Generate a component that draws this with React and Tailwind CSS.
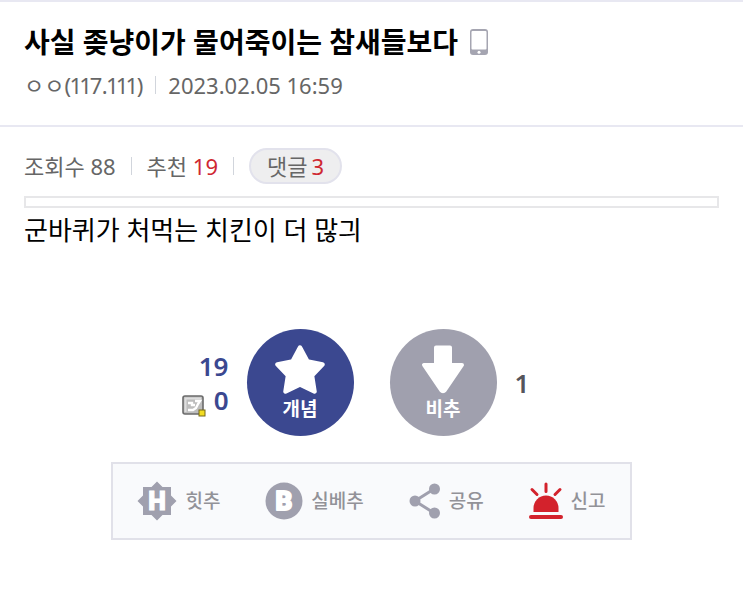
import React, { useState } from "react";

const Divider = () => <span className="h-[18px] w-px bg-gray-300" />;

const PhoneIcon = () => (
  <svg viewBox="0 0 18 26" className="h-[26px] w-[18px]" aria-hidden="true">
    <rect width="18" height="26" rx="3" fill="#a5a5b1" />
    <rect x="1.500" y="2" width="15" height="18.500" rx="1" fill="#fff" />
    <circle cx="9" cy="23.200" r="1.500" fill="#fff" />
  </svg>
);

const StarIcon = () => (
  <svg viewBox="0 0 50 50" className="h-[50px] w-[50px]" aria-hidden="true">
    <path
      d="M25 2.500 L32.500 16.500 L47.500 19.500 L37 30.500 L39.500 46.500 L25 39.500 L10.500 46.500 L13 30.500 L2.500 19.500 L17.500 16.500 Z"
      fill="#fff"
      stroke="#fff"
      strokeWidth="4.500"
      strokeLinejoin="round"
    />
  </svg>
);

const DownIcon = () => (
  <svg viewBox="0 0 50 50" className="h-[50px] w-[50px]" aria-hidden="true">
    <path
      d="M18 2.500 H32 V20 H44 L27 45 Q25 47.500 23 45 L6 20 H18 Z"
      fill="#fff"
      stroke="#fff"
      strokeWidth="4"
      strokeLinejoin="round"
    />
  </svg>
);

// Icono pequeño de los votos de usuarios con cuenta fija
const MemberIcon = () => (
  <svg viewBox="0 0 24 22" className="h-[22px] w-6" aria-hidden="true">
    <rect x="1" y="1" width="20" height="18" rx="2" fill="#bdbdbd" stroke="#6b6b6b" strokeWidth="1.600" />
    <path d="M3.500 17 V3.500 H19" fill="none" stroke="#dedede" strokeWidth="2" />
    <path d="M6 8 H10 V10 H13 M13 6 H18 L16 9 L14 13 L11 15 H6" fill="none" stroke="#fff" strokeWidth="2.400" />
    <rect x="17" y="15" width="6" height="6" fill="#f2dc22" stroke="#75681b" />
  </svg>
);

const HitIcon = () => (
  <svg viewBox="0 0 40 40" className="h-10 w-10" aria-hidden="true">
    <path
      d="M20 0.500 L25.500 6 H34 V14.500 L39.500 20 L34 25.500 V34 H25.500 L20 39.500 L14.500 34 H6 V25.500 L0.500 20 L6 14.500 V6 H14.500 Z"
      fill="#a0a0ae"
    />
    <text x="20" y="29" textAnchor="middle" fill="#fff" stroke="#fff" strokeWidth="1" className="font-[Roboto] text-[25px] font-black">
      H
    </text>
  </svg>
);

const BestIcon = () => (
  <svg viewBox="0 0 38 38" className="h-[38px] w-[38px]" aria-hidden="true">
    <circle cx="19" cy="19" r="18.500" fill="#a0a0ae" />
    <text x="19" y="28" textAnchor="middle" fill="#fff" stroke="#fff" strokeWidth="1.800" strokeLinejoin="round" className="font-[Roboto] text-[26px] font-black">
      B
    </text>
  </svg>
);

const ShareIcon = () => (
  <svg viewBox="0 0 32 36" className="h-9 w-8" aria-hidden="true">
    <path d="M25 6 L6 18 L25 30" fill="none" stroke="#a0a0ae" strokeWidth="3" />
    <circle cx="25.500" cy="6" r="5.500" fill="#a0a0ae" />
    <circle cx="6" cy="18" r="5.500" fill="#a0a0ae" />
    <circle cx="25.500" cy="30" r="5.500" fill="#a0a0ae" />
  </svg>
);

const SirenIcon = () => (
  <svg viewBox="0 0 34 38" className="h-[38px] w-[34px]" aria-hidden="true">
    <path d="M4.500 30 V26 A12.500 12.500 0 0 1 29.500 26 V30 Z" fill="#d3222c" />
    <path
      d="M17 2 V9.500 M3 7.500 L8 12.500 M31 7.500 L26 12.500"
      stroke="#d3222c"
      strokeWidth="3"
      strokeLinecap="round"
    />
    <path d="M2 35 H32" stroke="#d3222c" strokeWidth="4" strokeLinecap="round" />
  </svg>
);

const actions = [
  { label: "힛추", icon: HitIcon },
  { label: "실베추", icon: BestIcon },
  { label: "공유", icon: ShareIcon },
  { label: "신고", icon: SirenIcon },
];

const App = () => {
  const [up, setUp] = useState(19);
  const [down, setDown] = useState(1);

  return (
    <main className="border-t-2 border-[#e8e8f2] bg-white font-['Noto_Sans','Noto_Sans_CJK_KR',sans-serif] text-black">
      <header className="border-b-2 border-[#e8e8f2] px-6 pt-5 pb-6">
        <div className="flex items-center gap-3">
          <h1 className="text-[28px] leading-10 font-bold">
            사실 좆냥이가 물어죽이는 참새들보다
          </h1>
          <PhoneIcon />
        </div>
        <div className="mt-[7px] flex items-center gap-3 text-[22px] leading-8 text-[#666]">
          <span className="proportional-nums">ㅇㅇ(117.111)</span>
          <Divider />
          <time dateTime="2023-02-05T16:59">2023.02.05 16:59</time>
        </div>
      </header>

      <div className="px-6 pt-[21px]">
        <div className="flex items-center gap-[15px] text-[22px] leading-8 text-[#666]">
          <span>조회수 88</span>
          <Divider />
          <span>
            추천 <span className="text-[#cf2832]">{up}</span>
          </span>
          <Divider />
          <a
            href="#comments"
            className="flex h-9 items-center gap-1 rounded-full border-2 border-[#e2e2ec] bg-[#eeeeef] px-4"
          >
            댓글<span className="text-[#cf2832]">3</span>
          </a>
        </div>
        <div className="mt-3 h-3 border-2 border-[#e7e7e9]" />
        <p className="mt-0.5 text-[26px] leading-10">
          군바퀴가 처먹는 치킨이 더 많긔
        </p>
      </div>

      <div className="mt-[79px] grid grid-cols-[1fr_auto_1fr] items-center gap-[18px]">
        <div className="flex flex-col items-end text-[26px] leading-[34px] font-semibold text-[#3b4890]">
          <span>{up}</span>
          <span className="flex items-end gap-2">
            <MemberIcon />0
          </span>
        </div>
        <div className="flex gap-9">
          <button
            type="button"
            onClick={() => setUp(up + 1)}
            className="flex size-[107px] cursor-pointer flex-col items-center rounded-full bg-[#3b4890] pt-4 text-[19px] leading-7 font-bold text-white"
          >
            <StarIcon />
            개념
          </button>
          <button
            type="button"
            onClick={() => setDown(down + 1)}
            className="flex size-[107px] cursor-pointer flex-col items-center rounded-full bg-[#a0a0ae] pt-4 text-[19px] leading-7 font-bold text-white"
          >
            <DownIcon />
            비추
          </button>
        </div>
        <span className="text-[26px] leading-[34px] font-semibold text-[#55555c]">
          {down}
        </span>
      </div>

      <div className="mx-auto mt-[26px] flex w-[70%] items-center justify-between border-2 border-[#e1e1e9] bg-[#f9fafc] px-6 py-[17px]">
        {actions.map(({ label, icon: Icon }) => (
          <button
            key={label}
            type="button"
            className="flex h-10 cursor-pointer items-center gap-2 text-[19px] leading-7 font-medium text-[#929298]"
          >
            <Icon />
            {label}
          </button>
        ))}
      </div>
    </main>
  );
};

export default App;
